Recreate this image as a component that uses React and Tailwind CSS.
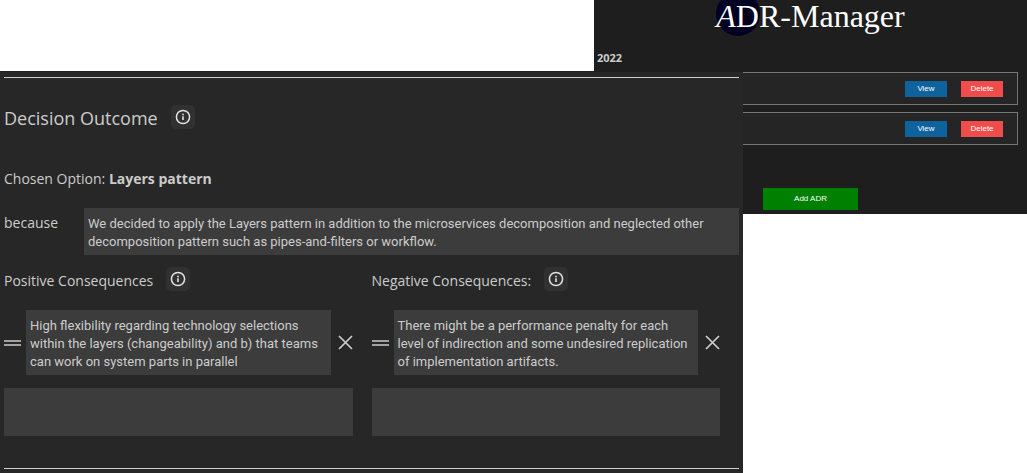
import { useState } from 'react'

const ADRS = [
  { id: 1, title: '' },
  { id: 2, title: '' },
]

const RATIONALE =
  'We decided to apply the Layers pattern in addition to the microservices decomposition and neglected other decomposition pattern such as pipes-and-filters or workflow.'

const POSITIVE =
  'High flexibility regarding technology selections within the layers (changeability) and b) that teams can work on system parts in parallel'

const NEGATIVE =
  'There might be a performance penalty for each level of indirection and some undesired replication of implementation artifacts.'

function Logo() {
  return (
    <h1 className="relative isolate font-['Liberation_Serif',serif] text-[32px] leading-8 text-white">
      <span className="absolute -top-2 left-0 -z-10 size-11 rounded-full bg-[#000022]" />
      <i>A</i>DR-Manager
    </h1>
  )
}

function AdrRow() {
  return (
    <li className="flex h-[33px] items-center justify-end gap-[14px] border border-[#767676] bg-[#252526] pr-[14px] font-['Liberation_Sans',sans-serif] text-[8px] text-white">
      <button type="button" className="h-4 w-[42px] bg-[#0e639c]">View</button>
      <button type="button" className="h-4 w-[42px] bg-[#f14c4c]">Delete</button>
    </li>
  )
}

function AdrList() {
  return (
    <section className="col-span-2 col-start-2 row-span-2 row-start-1 flex flex-col bg-[#1e1e1e]">
      <header className="flex justify-center">
        <Logo />
      </header>
      <h2 className="mt-[18px] pl-[3px] text-[11px] leading-4 font-bold text-[#cccccc]">2022</h2>
      <ul className="mt-[6px] mr-[9px] ml-[3px] flex flex-col gap-[7px]">
        {ADRS.map((adr) => <AdrRow key={adr.id} />)}
      </ul>
      <button
        type="button"
        className="mt-[43px] h-[22px] w-[95px] self-center bg-[#008000] font-['Liberation_Sans',sans-serif] text-[8px] text-white"
      >
        Add ADR
      </button>
    </section>
  )
}

function InfoButton({ label }) {
  return (
    <button type="button" aria-label={label} className="flex size-6 items-center justify-center rounded-[5px] bg-[#313131] text-[#e4e4e4]">
      <svg viewBox="0 0 16 16" className="size-4" fill="none" stroke="currentColor">
        <circle cx="8" cy="8" r="6.6" strokeWidth="1.5" />
        <path d="M8 7.2v3.8M8 4.8v1.4" strokeWidth="1.6" />
      </svg>
    </button>
  )
}

function Consequences({ title, kind, initial }) {
  const [text, setText] = useState(initial)
  const [draft, setDraft] = useState('')

  return (
    <div className="pr-[19px]">
      <div className="flex h-6 items-center gap-[13px]">
        <h3 className="pt-1 text-[14px] leading-6">{title}</h3>
        <InfoButton label={`About ${kind} consequences`} />
      </div>
      <div className="mt-[19px] flex items-center">
        <svg viewBox="0 0 17 6" className="h-[6px] w-[17px] shrink-0" stroke="currentColor">
          <path d="M0 1h17M0 5h17" strokeWidth="1.4" />
        </svg>
        <textarea
          aria-label={`${kind} consequence`}
          rows={3}
          value={text}
          onChange={(e) => setText(e.target.value)}
          className="ml-[5px] block h-[65px] min-w-0 flex-1 resize-none overflow-hidden bg-[#3c3c3c] px-1 pt-[7px] font-['Roboto',sans-serif] text-[13px] leading-[18px] outline-none"
        />
        <button type="button" aria-label={`Remove ${kind} consequence`} className="flex w-[22px] justify-end">
          <svg viewBox="0 0 15 15" className="size-[15px]" stroke="currentColor">
            <path d="M1 1l13 13M14 1L1 14" strokeWidth="1.7" />
          </svg>
        </button>
      </div>
      <textarea
        aria-label={`New ${kind} consequence`}
        value={draft}
        onChange={(e) => setDraft(e.target.value)}
        className="mt-[13px] block h-12 w-full resize-none overflow-hidden bg-[#3c3c3c] px-1 pt-[7px] font-['Roboto',sans-serif] text-[13px] leading-[18px] outline-none"
      />
    </div>
  )
}

function DecisionOutcome() {
  const [reason, setReason] = useState(RATIONALE)

  return (
    <section className="z-10 col-span-2 col-start-1 row-span-2 row-start-2 border-t border-[#1e1e1e] bg-[#272727] px-1 pt-[5px] pb-1 text-[#cccccc]">
      <hr className="border-[#cfcfcf]" />
      <div className="mt-[27px] flex h-6 items-center gap-[13px]">
        <h2 className="pt-0.5 text-[18px] leading-6">Decision Outcome</h2>
        <InfoButton label="About decision outcome" />
      </div>
      <p className="mt-[38px] text-[14px] leading-6">
        Chosen Option: <strong className="font-bold">Layers pattern</strong>
      </p>
      <div className="mt-[17px] flex">
        <label htmlFor="reason" className="w-20 pt-[3px] text-[14px] leading-6">because</label>
        <textarea
          id="reason"
          value={reason}
          onChange={(e) => setReason(e.target.value)}
          className="block h-[47px] min-w-0 flex-1 resize-none overflow-hidden bg-[#3c3c3c] px-1 pt-[7px] font-['Roboto',sans-serif] text-[13px] leading-[18px] outline-none"
        />
      </div>
      <div className="mt-3 grid grid-cols-2">
        <Consequences title="Positive Consequences" kind="positive" initial={POSITIVE} />
        <Consequences title="Negative Consequences:" kind="negative" initial={NEGATIVE} />
      </div>
      <hr className="mt-8 border-[#cfcfcf]" />
    </section>
  )
}

export default function App() {
  return (
    <main className="grid min-h-screen grid-cols-[594fr_149fr_284fr] grid-rows-[71px_143px_1fr] bg-white font-['Open_Sans','Noto_Sans',sans-serif]">
      <AdrList />
      <DecisionOutcome />
    </main>
  )
}
